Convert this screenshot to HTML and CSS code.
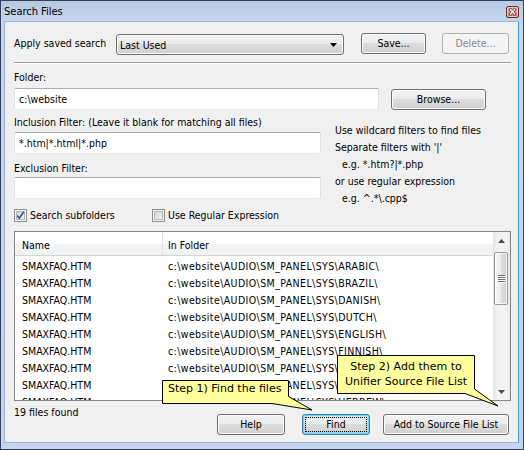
FILE: index.html
```html
<!DOCTYPE html>
<html>
<head>
<meta charset="utf-8">
<title>Search Files</title>
<link rel="stylesheet" href="styles.css">
</head>
<body>
<div class="window">
  <div class="titlebar">
    <span class="title">Search Files</span>
    <span class="close">
      <svg width="13" height="12" viewBox="0 0 13 12">
        <defs>
          <linearGradient id="cg" x1="0" y1="0" x2="0" y2="1">
            <stop offset="0" stop-color="#ecbcb0"/>
            <stop offset="1" stop-color="#c9705e"/>
          </linearGradient>
        </defs>
        <rect x="0.5" y="0.5" width="12" height="11" rx="1.5" fill="url(#cg)" stroke="#6e2c22"/>
        <rect x="1.5" y="1.5" width="10" height="9" rx="1" fill="none" stroke="#f6d8d0" stroke-opacity="0.8"/>
        <path d="M4.5 3.5 L8.5 8 M8.5 3.5 L4.5 8" stroke="#5b3b36" stroke-width="2.8" stroke-linecap="square"/>
        <path d="M4.5 3.5 L8.5 8 M8.5 3.5 L4.5 8" stroke="#ffffff" stroke-width="1.3" stroke-linecap="square"/>
      </svg>
    </span>
  </div>
  <div class="client">
    <div class="saved-row">
      <span class="lbl saved-lbl">Apply saved search</span>
      <div class="combo">
        <span class="combo-text">Last Used</span>
        <svg class="combo-arrow" width="7" height="4" viewBox="0 0 7 4"><path d="M0 0 H7 L3.5 4 Z" fill="#000"/></svg>
      </div>
      <button class="btn save">Save...</button>
      <button class="btn disabled delete">Delete...</button>
    </div>
    <div class="sep"></div>
    <div class="lbl folder-lbl">Folder:</div>
    <div class="folder-row">
      <div class="edit folder-edit">c:\website</div>
      <button class="btn browse">Browse...</button>
    </div>
    <div class="filters">
      <div class="filter-left">
        <div class="lbl">Inclusion Filter: (Leave it blank for matching all files)</div>
        <div class="edit incl-edit">*.htm|*.html|*.php</div>
        <div class="lbl excl-lbl">Exclusion Filter:</div>
        <div class="edit excl-edit"></div>
      </div>
      <div class="hint">
        <div>Use wildcard filters to find files</div>
        <div>Separate filters with '|'</div>
        <div class="ind">e.g. *.htm?|*.php</div>
        <div>or use regular expression</div>
        <div class="ind">e.g. ^.*\.cpp$</div>
      </div>
    </div>
    <div class="checks">
      <div class="check first">
        <svg width="13" height="13" viewBox="0 0 13 13">
          <defs>
            <linearGradient id="cb1" x1="0" y1="0" x2="1" y2="1">
              <stop offset="0" stop-color="#cdd1d6"/>
              <stop offset="1" stop-color="#f7f7f7"/>
            </linearGradient>
          </defs>
          <rect x="0.5" y="0.5" width="12" height="12" fill="#f5f5f5" stroke="#8e8f8f"/>
          <rect x="2.5" y="2.5" width="8" height="8" fill="url(#cb1)" stroke="#b4b8bd"/>
          <path d="M3.3 6.6 L5.4 9.2 L9.8 2.8" fill="none" stroke="#3f5a8a" stroke-width="1.7"/>
        </svg>
        <span>Search subfolders</span>
      </div>
      <div class="check">
        <svg width="13" height="13" viewBox="0 0 13 13">
          <defs>
            <linearGradient id="cb2" x1="0" y1="0" x2="1" y2="1">
              <stop offset="0" stop-color="#cdd1d6"/>
              <stop offset="1" stop-color="#f7f7f7"/>
            </linearGradient>
          </defs>
          <rect x="0.5" y="0.5" width="12" height="12" fill="#f5f5f5" stroke="#8e8f8f"/>
          <rect x="2.5" y="2.5" width="8" height="8" fill="url(#cb2)" stroke="#b4b8bd"/>
        </svg>
        <span>Use Regular Expression</span>
      </div>
    </div>
    <div class="list">
      <div class="list-main">
        <div class="lv-head">
          <div class="hc c1">Name</div>
          <div class="hc c2">In Folder</div>
        </div>
        <div class="lv-body">
          <div class="lv-row"><span class="c1">SMAXFAQ.HTM</span><span class="c2">c:\website\AUDIO\SM_PANEL\SYS\ARABIC\</span></div>
          <div class="lv-row"><span class="c1">SMAXFAQ.HTM</span><span class="c2">c:\website\AUDIO\SM_PANEL\SYS\BRAZIL\</span></div>
          <div class="lv-row"><span class="c1">SMAXFAQ.HTM</span><span class="c2">c:\website\AUDIO\SM_PANEL\SYS\DANISH\</span></div>
          <div class="lv-row"><span class="c1">SMAXFAQ.HTM</span><span class="c2">c:\website\AUDIO\SM_PANEL\SYS\DUTCH\</span></div>
          <div class="lv-row"><span class="c1">SMAXFAQ.HTM</span><span class="c2">c:\website\AUDIO\SM_PANEL\SYS\ENGLISH\</span></div>
          <div class="lv-row"><span class="c1">SMAXFAQ.HTM</span><span class="c2">c:\website\AUDIO\SM_PANEL\SYS\FINNISH\</span></div>
          <div class="lv-row"><span class="c1">SMAXFAQ.HTM</span><span class="c2">c:\website\AUDIO\SM_PANEL\SYS\FRENCH\</span></div>
          <div class="lv-row"><span class="c1">SMAXFAQ.HTM</span><span class="c2">c:\website\AUDIO\SM_PANEL\SYS\GERMAN\</span></div>
          <div class="lv-row"><span class="c1">SMAXFAQ.HTM</span><span class="c2">c:\website\AUDIO\SM_PANEL\SYS\HEBREW\</span></div>
        </div>
      </div>
      <div class="vscroll">
        <div class="sb-arrow"><svg width="7" height="4" viewBox="0 0 7 4"><path d="M0 4 H7 L3.5 0 Z" fill="#4a4a4a"/></svg></div>
        <div class="sb-track">
          <div class="sb-thumb">
            <svg width="7" height="8" viewBox="0 0 7 8">
              <path d="M0 0.5 H7 M0 2.5 H7 M0 4.5 H7 M0 6.5 H7" stroke="#6a6a6a"/>
              <path d="M0 1.5 H7 M0 3.5 H7 M0 5.5 H7 M0 7.5 H7" stroke="#ffffff"/>
            </svg>
          </div>
        </div>
        <div class="sb-arrow"><svg width="7" height="4" viewBox="0 0 7 4"><path d="M0 0 H7 L3.5 4 Z" fill="#4a4a4a"/></svg></div>
      </div>
    </div>
    <div class="bottom">
      <span class="status">19 files found</span>
      <button class="btn help">Help</button>
      <button class="btn focus find">Find</button>
      <button class="btn add">Add to Source File List</button>
    </div>
  </div>

  <div class="tip tip1">
    <svg class="tip-shape" width="155" height="32" viewBox="0 0 155 32">
      <path d="M0.5 0.5 H126.5 V16.5 L150 30 L110 23.5 H0.5 Z" fill="#ffff9e" stroke="#000"/>
    </svg>
    <div class="tip-text">Step 1) Find the files</div>
  </div>
  <div class="tip tip2">
    <svg class="tip-shape" width="165" height="54" viewBox="0 0 165 54">
      <path d="M0.5 0.5 H137.5 V34 L161 51 L128 38.5 H0.5 Z" fill="#ffff9e" stroke="#000"/>
    </svg>
    <div class="tip-text">Step 2) Add them to<br>Unifier Source File List</div>
  </div>
</div>
</body>
</html>
```

FILE: styles.css
```css
* { box-sizing: border-box; }
html, body { margin: 0; padding: 0; }
body {
  width: 524px;
  height: 450px;
  overflow: hidden;
  background: #ffffff;
  font-family: "DejaVu Sans Condensed", "DejaVu Sans", sans-serif;
  font-stretch: condensed;
  font-size: 10.5px;
  color: #000;
}

.window {
  position: relative;
  width: 524px;
  height: 450px;
  border: 1px solid #34415a;
  background: linear-gradient(#b6cae4 0, #c6d8ee 22px, #c4d6ed 100%);
  padding: 0 4px 6px 3px;
  display: flex;
  flex-direction: column;
}

.titlebar {
  height: 20px;
  flex: none;
  position: relative;
}
.title {
  display: block;
  font-size: 11px;
  line-height: 20px;
  padding-top: 1px;
}
.close {
  position: absolute;
  right: 0;
  top: 5px;
  width: 13px;
  height: 12px;
  display: block;
}
.close svg { display: block; }

.client {
  flex: 1;
  background: #f0f0f0;
  border: 1px solid #9bb3d4;
  border-right-color: #3d9be0;
  padding: 11px 7px 0 9px;
  display: flex;
  flex-direction: column;
}

.lbl { line-height: 13px; white-space: nowrap; }

/* row 1 */
.saved-row {
  display: flex;
  align-items: flex-start;
  height: 21px;
  flex: none;
}
.saved-lbl {
  width: 102px;
  flex: none;
  line-height: 21px;
}
.combo {
  width: 228px;
  height: 21px;
  margin-top: 1px;
  border: 1px solid #707070;
  border-radius: 3px;
  background: linear-gradient(#f2f2f2 0%, #ebebeb 49%, #dddddd 50%, #cfcfcf 100%);
  box-shadow: inset 0 0 0 1px #fbfbfb;
  display: flex;
  align-items: center;
  padding: 0 6px 0 3px;
}
.combo-text { flex: 1; }
.combo-arrow { display: block; }

.btn {
  font: inherit;
  font-stretch: condensed;
  height: 21px;
  flex: none;
  border: 1px solid #707070;
  border-radius: 3px;
  background: linear-gradient(#f2f2f2 0%, #ebebeb 49%, #dddddd 50%, #cfcfcf 100%);
  box-shadow: inset 0 0 0 1px #fbfbfb;
  padding: 0;
  margin: 0;
  color: #000;
  line-height: 19px;
  text-align: center;
}
.btn.disabled {
  border-color: #adb2b5;
  background: #f4f4f4;
  box-shadow: none;
  color: #8a8a8a;
}
.btn.focus {
  border-color: #3c7fb1;
  box-shadow: inset 0 0 0 1px #6ad6f4, inset 0 0 3px 2px rgba(100, 200, 240, 0.35);
  outline: 1px dotted #000;
  outline-offset: -4px;
}
.save { width: 65px; margin-left: 17px; }
.delete { width: 67px; margin-left: 16px; }

.sep {
  margin-top: 8px;
  height: 2px;
  flex: none;
  border-top: 1px solid #a0a0a0;
  border-bottom: 1px solid #ffffff;
}
.folder-lbl { margin-top: 7px; }

.folder-row {
  display: flex;
  align-items: flex-start;
  margin-top: 4px;
  flex: none;
}
.edit {
  height: 22px;
  flex: none;
  background: #fff;
  border: 1px solid;
  border-color: #abadb3 #dbdfe6 #e3e9ef #e2e3ea;
  border-radius: 2px;
  padding: 0 4px;
  line-height: 20px;
  white-space: nowrap;
}
.folder-edit { width: 365px; }
.browse { width: 95px; margin-left: 12px; margin-top: 1px; }

.filters {
  display: flex;
  align-items: flex-start;
  margin-top: 6px;
  height: 83px;
  flex: none;
}
.filter-left {
  width: 307px;
  flex: none;
  display: flex;
  flex-direction: column;
}
.incl-edit { margin-top: 3px; }
.excl-lbl { margin-top: 8px; }
.excl-edit { margin-top: 2px; }
.hint {
  margin-left: 14px;
  margin-top: 6px;
  line-height: 17px;
  white-space: nowrap;
}
.hint .ind { padding-left: 7px; }

.checks {
  display: flex;
  align-items: center;
  height: 13px;
  flex: none;
  margin-top: 10px;
}
.check {
  display: flex;
  align-items: center;
  line-height: 13px;
}
.check.first { width: 138px; }
.check svg { display: block; margin-right: 3px; flex: none; }

/* list view */
.list {
  display: flex;
  height: 170px;
  margin-top: 9px;
  border: 1px solid #828790;
  background: #fff;
  flex: none;
}
.list-main {
  flex: 1;
  min-width: 0;
  display: flex;
  flex-direction: column;
  overflow: hidden;
}
.lv-head {
  display: flex;
  height: 24px;
  flex: none;
  border-bottom: 1px solid #d5d5d5;
  background: linear-gradient(#ffffff 0, #ffffff 50%, #f4f5f7 50%, #f0f1f3 100%);
}
.hc {
  padding-top: 4px;
  line-height: 19px;
}
.c1 {
  width: 148px;
  flex: none;
  padding-left: 7px;
}
.hc.c1 { border-right: 1px solid #e2e4e7; }
.c2 { padding-left: 5px; white-space: nowrap; }
.lv-row .c2 { letter-spacing: 0.4px; }
.lv-body {
  flex: 1;
  padding-top: 2px;
  overflow: hidden;
}
.lv-row {
  display: flex;
  height: 17px;
  line-height: 17px;
  white-space: nowrap;
}

.vscroll {
  width: 17px;
  flex: none;
  display: flex;
  flex-direction: column;
  background: linear-gradient(to right, #e4e4e4 0, #f1f1f1 25%, #f4f4f4 75%, #e9e9e9 100%);
}
.sb-arrow {
  height: 17px;
  flex: none;
  display: flex;
  align-items: center;
  justify-content: center;
}
.sb-arrow svg { display: block; }
.sb-track {
  flex: 1;
  padding-top: 3px;
}
.sb-thumb {
  height: 53px;
  margin: 0 2px 0 1px;
  border: 1px solid #979797;
  border-radius: 2px;
  background: linear-gradient(to right, #f6f6f6 0, #ececec 45%, #dcdcdc 55%, #d2d2d2 100%);
  box-shadow: inset 0 0 0 1px rgba(255, 255, 255, 0.75);
  display: flex;
  align-items: center;
  justify-content: center;
}
.sb-thumb svg { display: block; }

.bottom {
  display: flex;
  align-items: flex-start;
  margin-top: 5px;
  padding-right: 2px;
  flex: none;
}
.status {
  margin-right: auto;
  line-height: 13px;
}
.bottom .btn { margin-top: 8px; }
.help { width: 68px; }
.find { width: 68px; margin-left: 17px; }
.add { width: 126px; margin-left: 13px; }

/* balloon tips */
.tip {
  position: absolute;
  font-family: "DejaVu Sans", sans-serif;
  font-stretch: normal;
  font-size: 11px;
  line-height: 15px;
  color: #000;
}
.tip-shape {
  position: absolute;
  left: 0;
  top: 0;
  display: block;
}
.tip-text {
  position: relative;
  white-space: nowrap;
}
.tip1 {
  left: 161px;
  top: 379px;
  width: 155px;
  height: 32px;
}
.tip1 .tip-text { padding: 1px 0 0 6px; }
.tip2 {
  left: 336px;
  top: 354px;
  width: 165px;
  height: 54px;
}
.tip2 .tip-text {
  width: 138px;
  padding-top: 4px;
  text-align: center;
}
```
